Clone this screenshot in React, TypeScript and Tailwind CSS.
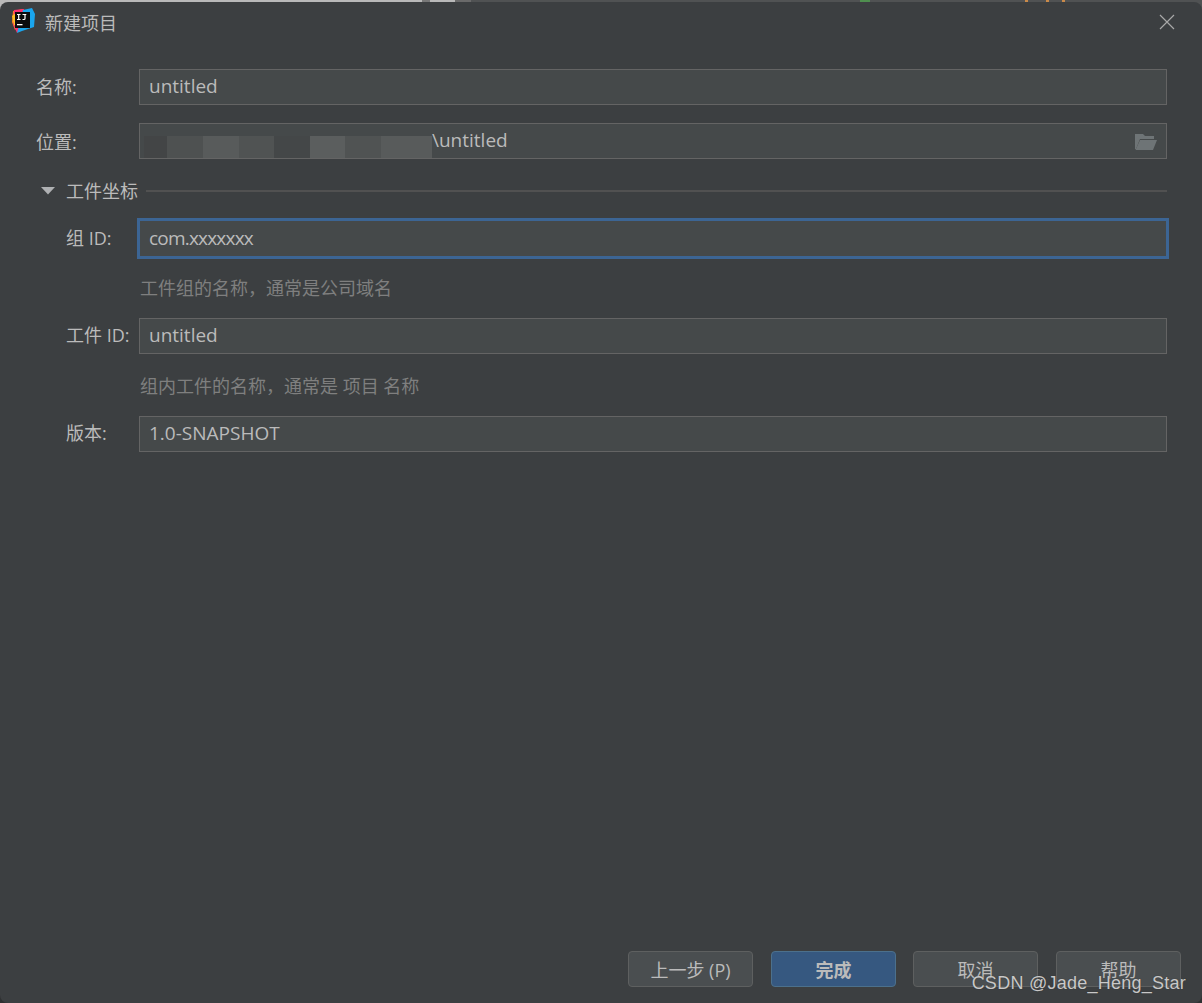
import React from "react";

const font = { fontFamily: '"Open Sans","Noto Sans CJK SC",sans-serif' };

function Logo() {
  return (
    <svg width="26" height="26" viewBox="0 0 26 26" className="shrink-0">
      <polygon points="3,3 13,1 15,10 5,22 2,14" fill="#ff8a1e" />
      <polygon points="4,2 14,1 16,12 7,25 3,16" fill="#fb2f6e" />
      <polygon points="13,2 22,0 25,6 24,19 12,23 7,25" fill="#1aa6ee" />
      <polygon points="2,8 7,4 7,18 4,17" fill="#fdbd24" />
      <rect x="5" y="4" width="15" height="16" fill="#0b0b0d" />
      <path d="M7 6.5h3.5M8.7 6.5v5M7 11.5h3.5M12.5 6.5h3.8M15 6.5v4q0 1-1 1h-1.5" stroke="#fff" strokeWidth="1.2" fill="none" />
      <rect x="7" y="16" width="5.5" height="1.3" fill="#fff" />
    </svg>
  );
}

function Field({ label, value, indent, focused, tight }: { label: string; value: string; indent?: boolean; focused?: boolean; tight?: boolean }) {
  return (
    <div className="flex items-center h-[36px]">
      <div className={indent
        ? focused
          ? "w-[139px] pl-[66px] text-[18px] text-[#bbbbbb] whitespace-nowrap"
          : "w-[139px] pl-[66px] pb-[2px] text-[18px] text-[#bbbbbb] whitespace-nowrap"
        : "w-[139px] pl-[36px] text-[18px] text-[#bbbbbb]"}>{label}</div>
      <div className={focused
        ? "flex-1 h-[37px] flex items-center pl-[9px] bg-[#45494a] border border-[#5c5f61] text-[19px] text-[#bbbbbb] outline-[3px] outline-[#3c6594] -outline-offset-[1px]"
        : "flex-1 h-[36px] flex items-center pl-[9px] pb-[2px] bg-[#45494a] border border-[#646464] text-[19px] text-[#bbbbbb]"}>
        <span className={tight ? "tracking-[-0.8px]" : ""}>{value}</span>
      </div>
    </div>
  );
}

const blur = [
  ["w-[23px]", "bg-[#434546]"],
  ["w-[36px]", "bg-[#4e5151]"],
  ["w-[36px]", "bg-[#585b5b]"],
  ["w-[35px]", "bg-[#505353]"],
  ["w-[36px]", "bg-[#444748]"],
  ["w-[35px]", "bg-[#5b5e5e]"],
  ["w-[36px]", "bg-[#505353]"],
  ["w-[51px]", "bg-[#585b5b]"],
];

export default function App() {
  return (
    <div className="relative w-[1202px] h-[1003px] flex flex-col overflow-hidden bg-[#2f3132]" style={font}>
      <div className="flex h-[10px] -mb-[8px] shrink-0 bg-[#505253]">
        <div className="w-[422px] bg-[#b9b9b9]" />
        <div className="w-[8px] bg-[#777777]" />
        <div className="w-[25px] bg-[#b9b9b9]" />
        <div className="w-[16px] bg-[#6a6a6a]" />
        <div className="w-[389px]" />
        <div className="w-[10px] bg-[#4f8f4f]" />
        <div className="w-[155px]" />
        <div className="w-[3px] bg-[#c98a4a]" />
        <div className="w-[18px]" />
        <div className="w-[3px] bg-[#c98a4a]" />
        <div className="w-[13px]" />
        <div className="w-[3px] bg-[#c98a4a]" />
      </div>

      <div className="relative flex flex-col flex-1 bg-[#3c3f41] rounded-[8px]">
        <div className="flex items-center justify-between h-[42px] pl-[10px] pr-[26px]">
          <div className="flex items-center gap-[8px]">
            <div className="-mt-[4px]"><Logo /></div>
            <span className="text-[18px] leading-[24px] text-[#bbbbbb] ml-[1px]">新建项目</span>
          </div>
          <svg width="16" height="16" viewBox="0 0 16 16" className="mr-[1px] -mt-[2px]">
            <path d="M1 1L15 15M15 1L1 15" stroke="#a8a8a8" strokeWidth="1.2" fill="none" />
          </svg>
        </div>

        <div className="flex flex-col pr-[35px] pt-[25px] flex-1">
          <Field label="名称:" value="untitled" />

          <div className="flex items-center h-[36px] mt-[18px]">
            <div className="w-[139px] pl-[36px] text-[18px] text-[#bbbbbb] mt-[2px]">位置:</div>
            <div className="flex-1 h-[36px] flex items-stretch bg-[#45494a] border border-[#646464] pl-[4px] pr-[8px] text-[19px] text-[#bbbbbb]">
              <div className="flex self-end h-[22px]">
                {blur.map(([w, c], i) => (
                  <div key={i} className={`${w} ${c}`} />
                ))}
              </div>
              <span className="self-center -mt-[2px] flex-1">\untitled</span>
              <svg width="24" height="18" viewBox="0 0 24 18" className="self-center mt-[1px]">
                <path d="M1 1h8l2 2h9v3H6L2 16H1z" fill="#6e7476" />
                <path d="M6 7h17l-4 10H1.5z" fill="#6e7476" />
              </svg>
            </div>
          </div>

          <div className="flex items-center h-[26px] mt-[19px]">
            <svg width="16" height="10" viewBox="0 0 16 10" className="ml-[40px] shrink-0">
              <path d="M1 1h14L8 8.5z" fill="#afb1b3" />
            </svg>
            <span className="ml-[10px] text-[18px] text-[#bbbbbb]">工件坐标</span>
            <div className="flex-1 h-[2px] bg-[#515151] ml-[8px]" />
          </div>

          <div className="mt-[16px]">
            <Field label="组 ID:" value="com.xxxxxxx" indent focused tight />
          </div>
          <div className="pl-[140px] mt-[19px] h-[26px] text-[18px] text-[#7f7f7f] leading-[26px]">工件组的名称，通常是公司域名</div>

          <div className="mt-[17px]">
            <Field label="工件 ID:" value="untitled" indent />
          </div>
          <div className="pl-[140px] mt-[19px] h-[26px] text-[18px] text-[#7f7f7f] leading-[26px]">组内工件的名称，通常是 项目 名称</div>

          <div className="mt-[17px]">
            <Field label="版本:" value="1.0-SNAPSHOT" indent />
          </div>
        </div>

        <div className="flex justify-end pr-[21px] pb-[16px]">
          <button className="w-[125px] h-[36px] mr-[18px] pt-[3px] rounded-[4px] bg-[#4a4e50] border border-[#5e6060] text-[18px] text-[#bbbbbb]">上一步 (P)</button>
          <button className="w-[125px] h-[36px] mr-[17px] pt-[3px] rounded-[4px] bg-[#365880] border border-[#4c708c] text-[18px] font-bold text-[#bbbbbb]">完成</button>
          <button className="w-[125px] h-[36px] mr-[18px] pt-[3px] rounded-[4px] bg-[#4a4e50] border border-[#5e6060] text-[18px] text-[#bbbbbb]">取消</button>
          <button className="w-[125px] h-[36px] pt-[3px] rounded-[4px] bg-[#4a4e50] border border-[#5e6060] text-[18px] text-[#bbbbbb]">帮助</button>
        </div>
      </div>

      <div className="absolute right-[16px] bottom-[8px] text-[18px] leading-[24px] tracking-[0.25px] text-[#c8c8c8] whitespace-nowrap" style={{ fontFamily: '"Liberation Sans",sans-serif', textShadow: "0 0 1px #333" }}>CSDN @Jade_Heng_Star</div>
    </div>
  );
}
